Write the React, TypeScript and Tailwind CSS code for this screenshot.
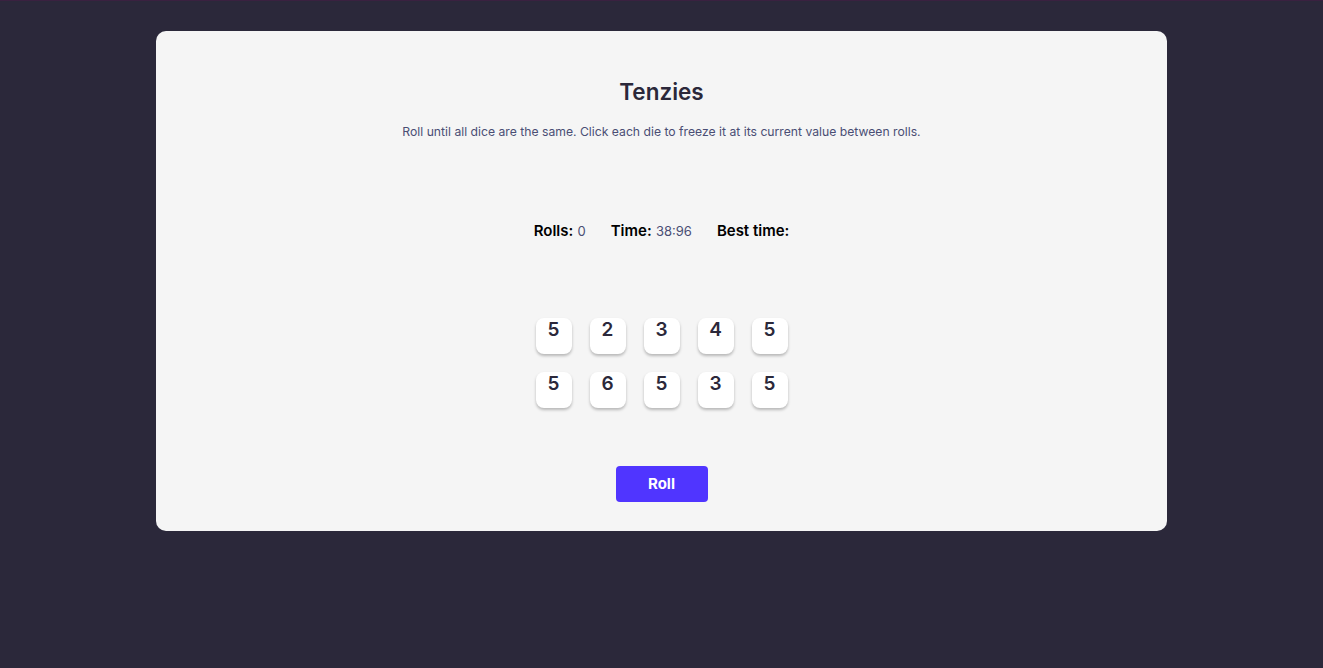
const dice = [5, 2, 3, 4, 5, 5, 6, 5, 3, 5];

export default function App() {
  return (
    <main
      className="min-h-[668px] border-t border-[#3a2140] bg-[#2b283a] pt-[30px]"
      style={{ fontFamily: "Inter, 'Noto Sans', sans-serif" }}
    >
      <div className="mx-auto flex h-[500px] w-[1011px] flex-col items-center rounded-[10px] bg-[#f5f5f5]">
        {/* Title */}
        <h1 className="mt-[46px] text-[22.5px] font-semibold leading-[30px] text-[#2b283a]">
          Tenzies
        </h1>
        <p className="mt-[17px] text-[12.2px] leading-[16px] text-[#4a4e74]">
          Roll until all dice are the same. Click each die to freeze it at its current value between rolls.
        </p>

        {/* Stats */}
        <div className="mt-[81px] flex items-baseline gap-[25px] text-[15px] leading-[20px] text-black">
          <div>
            <span className="font-semibold">Rolls:</span>{" "}
            <span className="text-[13px] text-[#4a4e74]">0</span>
          </div>
          <div>
            <span className="font-semibold">Time:</span>{" "}
            <span className="text-[13px] text-[#4a4e74]">38:96</span>
          </div>
          <div>
            <span className="font-semibold">Best time:</span>
          </div>
        </div>

        {/* Dice */}
        <div className="mt-[77px] grid grid-cols-5 gap-x-[18px] gap-y-[18px]">
          {dice.map((v, i) => (
            <button
              key={i}
              className="flex h-[36px] w-[36px] justify-center rounded-[8px] bg-white pt-[1px] text-[19px] font-semibold leading-[22px] text-[#2b283a] shadow-[0_2px_3px_rgba(0,0,0,0.25)]"
            >
              {v}
            </button>
          ))}
        </div>

        {/* Roll */}
        <button className="mt-[58px] h-[36px] w-[92px] rounded-[4px] bg-[#5035ff] text-[15px] font-bold text-white">
          Roll
        </button>
      </div>
    </main>
  );
}
